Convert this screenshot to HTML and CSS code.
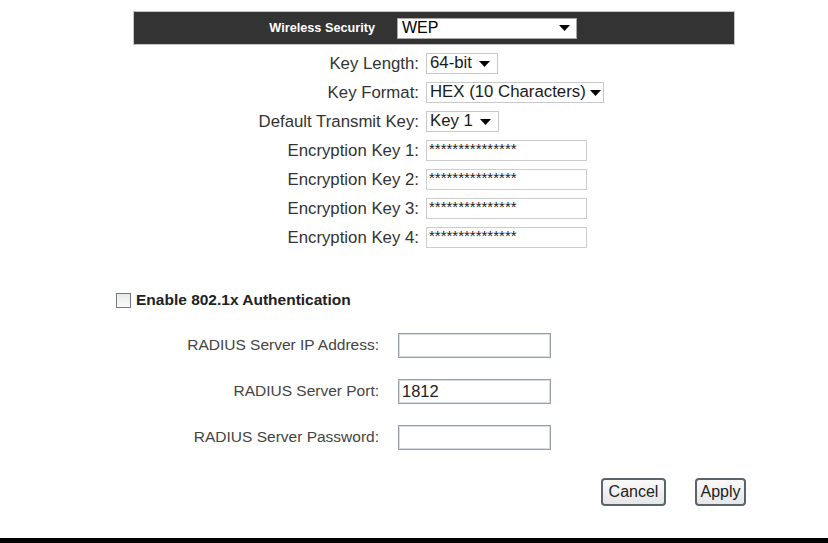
FILE: index.html
```html
<!DOCTYPE html>
<html>
<head>
<meta charset="utf-8">
<title>Wireless Security</title>
<link rel="stylesheet" href="styles.css">
</head>
<body>
<div class="page">
  <div class="bar">
    <span class="bar-label">Wireless Security</span>
    <div class="select select-wide">
      <span class="select-text">WEP</span>
      <svg class="arrow" width="11" height="6" viewBox="0 0 11 6"><path d="M0 0H11L5.5 6Z" fill="#000"/></svg>
    </div>
  </div>

  <div class="key-grid">
    <label class="label">Key Length:</label>
    <div class="cell">
      <div class="select">
        <span class="select-text">64-bit</span>
        <svg class="arrow" width="11" height="6" viewBox="0 0 11 6"><path d="M0 0H11L5.5 6Z" fill="#000"/></svg>
      </div>
    </div>
    <label class="label">Key Format:</label>
    <div class="cell">
      <div class="select select-tight">
        <span class="select-text">HEX (10 Characters)</span>
        <svg class="arrow" width="11" height="6" viewBox="0 0 11 6"><path d="M0 0H11L5.5 6Z" fill="#000"/></svg>
      </div>
    </div>
    <label class="label">Default Transmit Key:</label>
    <div class="cell">
      <div class="select">
        <span class="select-text">Key 1</span>
        <svg class="arrow" width="11" height="6" viewBox="0 0 11 6"><path d="M0 0H11L5.5 6Z" fill="#000"/></svg>
      </div>
    </div>
    <label class="label">Encryption Key 1:</label>
    <div class="cell"><input class="key-input" type="text" value="***************" readonly></div>
    <label class="label">Encryption Key 2:</label>
    <div class="cell"><input class="key-input" type="text" value="***************" readonly></div>
    <label class="label">Encryption Key 3:</label>
    <div class="cell"><input class="key-input" type="text" value="***************" readonly></div>
    <label class="label">Encryption Key 4:</label>
    <div class="cell"><input class="key-input" type="text" value="***************" readonly></div>
  </div>

  <div class="check-row">
    <span class="checkbox"></span>
    <span class="check-text">Enable 802.1x Authentication</span>
  </div>

  <div class="radius-grid">
    <label class="rlabel">RADIUS Server IP Address:</label>
    <div class="cell"><input class="radius-input" type="text" value="" readonly></div>
    <label class="rlabel">RADIUS Server Port:</label>
    <div class="cell"><input class="radius-input" type="text" value="1812" readonly></div>
    <label class="rlabel">RADIUS Server Password:</label>
    <div class="cell"><input class="radius-input" type="text" value="" readonly></div>
  </div>

  <div class="buttons">
    <button class="btn btn-cancel" type="button">Cancel</button>
    <button class="btn btn-apply" type="button">Apply</button>
  </div>

  <div class="footer-bar"></div>
</div>
</body>
</html>
```
FILE: styles.css
```css
html, body {
  margin: 0;
  padding: 0;
  background: #fff;
}

body {
  font-family: "Liberation Sans", Arial, sans-serif;
  color: #333;
}

.page {
  width: 828px;
  height: 543px;
  display: flex;
  flex-direction: column;
  overflow: hidden;
}

.bar {
  box-sizing: border-box;
  margin: 11px 0 0 133px;
  width: 602px;
  height: 34px;
  background: #333;
  border: 1px solid #c4c4c4;
  display: flex;
  align-items: center;
}

.bar-label {
  box-sizing: border-box;
  width: 241px;
  text-align: right;
  color: #fff;
  font-weight: bold;
  font-size: 12.7px;
}

.select {
  box-sizing: border-box;
  height: 21px;
  display: inline-flex;
  align-items: center;
  background: #fff;
  border: 1px solid #c9c9c9;
  padding: 0 7px 0 3px;
  gap: 7px;
  color: #1a1a1a;
  font-size: 16.8px;
}

.select-tight {
  padding-right: 2px;
  gap: 4px;
}

.select-wide {
  margin-left: 22px;
  width: 180px;
  justify-content: space-between;
  padding: 0 6px 0 4px;
  border-color: #a8a8a8;
  font-size: 16px;
  color: #000;
}

.select-text {
  white-space: nowrap;
  line-height: 1;
}

.arrow {
  display: block;
  flex: none;
}

.key-grid {
  margin-top: 4px;
  display: grid;
  grid-template-columns: 426px auto;
  grid-auto-rows: 29px;
  align-items: center;
}

.label {
  text-align: right;
  padding-right: 7px;
  font-size: 16.8px;
  color: #333;
  white-space: nowrap;
}

.cell {
  display: flex;
  align-items: center;
}

.key-input {
  box-sizing: border-box;
  width: 161px;
  height: 21px;
  border: 1px solid #cdcdcd;
  padding: 0 2px;
  margin: 0;
  font-family: "Liberation Sans", Arial, sans-serif;
  font-size: 15px;
  color: #222;
  outline: none;
  line-height: 1;
  padding-bottom: 4px;
}

.check-row {
  margin-top: 38px;
  height: 20px;
  padding-left: 116px;
  display: flex;
  align-items: center;
  gap: 5px;
}

.checkbox {
  box-sizing: border-box;
  width: 15px;
  height: 15px;
  border: 1px solid #6f7985;
  background: linear-gradient(#e9e9e9, #fbfbfb);
}

.check-text {
  font-weight: bold;
  font-size: 15.5px;
  color: #222;
}

.radius-grid {
  margin-top: 12px;
  display: grid;
  grid-template-columns: 398px auto;
  grid-auto-rows: 46px;
  align-items: center;
}

.rlabel {
  text-align: right;
  padding-right: 19px;
  font-size: 15.5px;
  color: #444;
  white-space: nowrap;
}

.radius-input {
  box-sizing: border-box;
  width: 153px;
  height: 25px;
  margin: 0;
  border: 1px solid #96a0aa;
  box-shadow: inset 0 0 0 1px #d7dde2;
  padding: 0 3px;
  font-family: "Liberation Sans", Arial, sans-serif;
  font-size: 16.5px;
  color: #222;
  outline: none;
}

.buttons {
  margin-top: 18px;
  display: flex;
  justify-content: flex-end;
  padding-right: 82px;
  gap: 29px;
}

.btn {
  box-sizing: border-box;
  height: 28px;
  margin: 0;
  padding: 0;
  border: 2px solid #5b636c;
  border-radius: 4px;
  background: linear-gradient(#fafafa, #e6e6e6);
  font-family: "Liberation Sans", Arial, sans-serif;
  font-size: 16px;
  color: #222;
}

.btn-cancel {
  width: 65px;
}

.btn-apply {
  width: 51px;
}

.footer-bar {
  margin-top: auto;
  height: 5px;
  background: #000;
}
```
